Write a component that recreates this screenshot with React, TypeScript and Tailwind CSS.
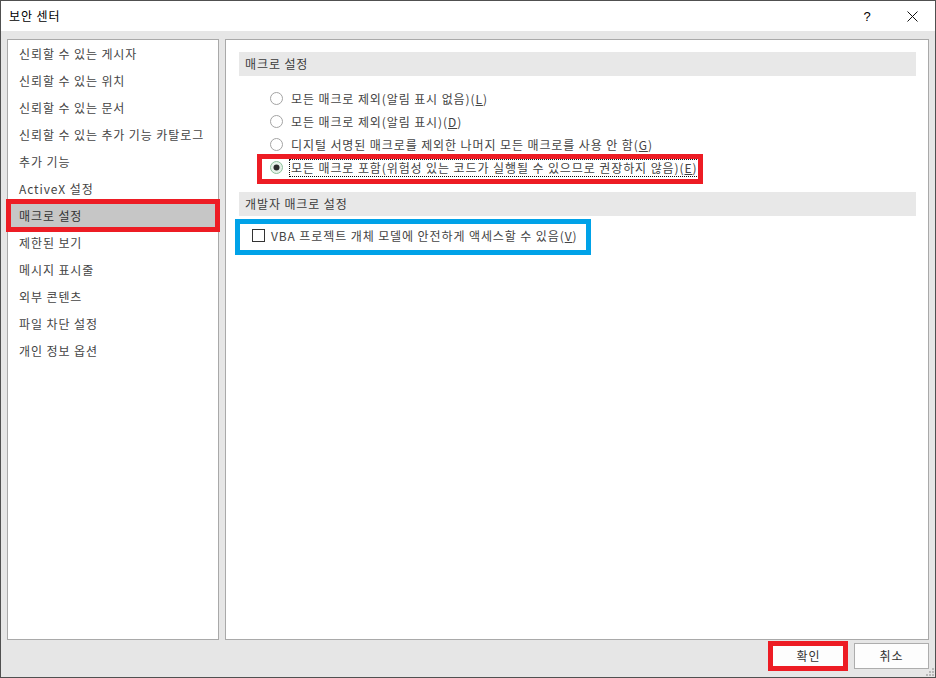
import type { ReactNode } from "react";

const MENU = [
  "신뢰할 수 있는 게시자",
  "신뢰할 수 있는 위치",
  "신뢰할 수 있는 문서",
  "신뢰할 수 있는 추가 기능 카탈로그",
  "추가 기능",
  "ActiveX 설정",
  "매크로 설정",
  "제한된 보기",
  "메시지 표시줄",
  "외부 콘텐츠",
  "파일 차단 설정",
  "개인 정보 옵션",
];

const RADIOS: { label: string; key: string }[] = [
  { label: "모든 매크로 제외(알림 표시 없음)", key: "L" },
  { label: "모든 매크로 제외(알림 표시)", key: "D" },
  { label: "디지털 서명된 매크로를 제외한 나머지 모든 매크로를 사용 안 함", key: "G" },
  { label: "모든 매크로 포함(위험성 있는 코드가 실행될 수 있으므로 권장하지 않음)", key: "E" },
];

function Radio({ checked }: { checked: boolean }) {
  return (
    <svg width="13" height="13" viewBox="0 0 13 13" className="shrink-0">
      {checked ? (
        <>
          <circle cx="6.5" cy="6.5" r="6" fill="#e6f2e9" stroke="#8cbf9a" />
          <circle cx="6.5" cy="6.5" r="3" fill="#2b2b2b" />
        </>
      ) : (
        <circle cx="6.5" cy="6.5" r="6" fill="#fff" stroke="#a3a3a3" />
      )}
    </svg>
  );
}

function Band({ children, className }: { children: ReactNode; className: string }) {
  return (
    <div className={`ml-[13px] mr-[12px] h-[24px] flex items-center pl-[6px] bg-[#e8e8e8] text-[#3b3b3b] ${className}`}>
      {children}
    </div>
  );
}

// annotation rectangle drawn over the screenshot
function Mark({ className }: { className: string }) {
  return <span className={`absolute pointer-events-none border-[5px] ${className}`} />;
}

export default function App() {
  return (
    <div className="relative w-[936px] h-[678px] border border-[#505050] bg-[#e6e6e6] flex flex-col font-['Noto_Sans_CJK_KR',sans-serif] text-[12px] leading-none tracking-[0.9px] text-[#444]">
      {/* Title bar */}
      <div className="h-[30px] bg-white flex items-center shrink-0">
        <span className="pl-[8px] text-black text-[12px]">보안 센터</span>
        <div className="ml-auto flex h-full">
          <div className="w-[45px] h-full flex items-center justify-center text-black text-[13px] font-['Liberation_Sans',sans-serif]">?</div>
          <div className="w-[45px] h-full flex items-center justify-center">
            <svg width="11" height="11" viewBox="0 0 11 11">
              <path d="M0.5 0.5 L10.5 10.5 M10.5 0.5 L0.5 10.5" stroke="#111" strokeWidth="1" fill="none" />
            </svg>
          </div>
        </div>
      </div>

      {/* Body */}
      <div className="flex-1 flex flex-col pt-[8px] pb-[8px] px-[6px]">
        <div className="flex gap-[6px] h-[601px]">
          {/* Category list */}
          <div className="w-[212px] border border-[#a9a9a9] bg-white">
            {MENU.map((m) => {
              const sel = m === "매크로 설정";
              return (
                <div key={m} className="h-[27px] px-[3px] py-[2px]">
                  <div
                    className={`h-[23px] flex items-center pl-[8px] ${
                      sel ? "bg-[#c6c6c6] outline-[5px] outline-solid outline-[#ed1c24] text-[#333]" : ""
                    }`}
                  >
                    {m}
                  </div>
                </div>
              );
            })}
          </div>

          {/* Settings */}
          <div className="w-[704px] border border-[#a9a9a9] bg-white flex flex-col">
            <Band className="mt-[12px]">매크로 설정</Band>

            <div className="mt-[11px] ml-[44px] flex flex-col">
              {RADIOS.map((r, i) => {
                const on = i === 3;
                return (
                  <div key={r.key} className="relative h-[23px] flex items-center">
                    <Radio checked={on} />
                    <span
                      className={`ml-[6px] h-[18px] px-[1px] flex items-center border ${
                        on ? "border-dotted border-[#111]" : "border-transparent"
                      }`}
                    >
                      {r.label}(<u>{r.key}</u>)
                    </span>
                    {on && <Mark className="left-[-13px] top-[-2px] w-[446px] h-[30px] border-[#ed1c24]" />}
                  </div>
                );
              })}
            </div>

            <Band className="mt-[13px]">개발자 매크로 설정</Band>

            <div className="relative mt-[7px] ml-[26px] h-[25px] flex items-center">
              <span className="w-[13px] h-[13px] border border-[#333] bg-white shrink-0" />
              <span className="ml-[6px]">
                VBA 프로젝트 개체 모델에 안전하게 액세스할 수 있음(<u>V</u>)
              </span>
              <Mark className="left-[-17px] top-[-4px] w-[356px] h-[36px] border-[#00a2e8]" />
            </div>
          </div>
        </div>

        {/* Buttons */}
        <div className="mt-[3px] flex justify-end gap-[8px]">
          <button className="relative w-[75px] h-[26px] border border-[#adadad] bg-[#fdfdfd] text-[#333] text-[12px]">
            확인
            <Mark className="left-[-4px] top-[-3px] w-[80px] h-[30px] border-[#ed1c24]" />
          </button>
          <button className="w-[75px] h-[26px] border border-[#adadad] bg-[#fdfdfd] text-[#333] text-[12px]">
            취소
          </button>
        </div>
      </div>

      {/* Resize grip */}
      <svg width="9" height="9" viewBox="0 0 9 9" className="absolute right-[1px] bottom-[1px]">
        <rect x="7" y="1" width="2" height="2" fill="#b8b8b8" />
        <rect x="4" y="4" width="2" height="2" fill="#b8b8b8" />
        <rect x="7" y="4" width="2" height="2" fill="#b8b8b8" />
        <rect x="1" y="7" width="2" height="2" fill="#b8b8b8" />
        <rect x="4" y="7" width="2" height="2" fill="#b8b8b8" />
        <rect x="7" y="7" width="2" height="2" fill="#b8b8b8" />
      </svg>
    </div>
  );
}
